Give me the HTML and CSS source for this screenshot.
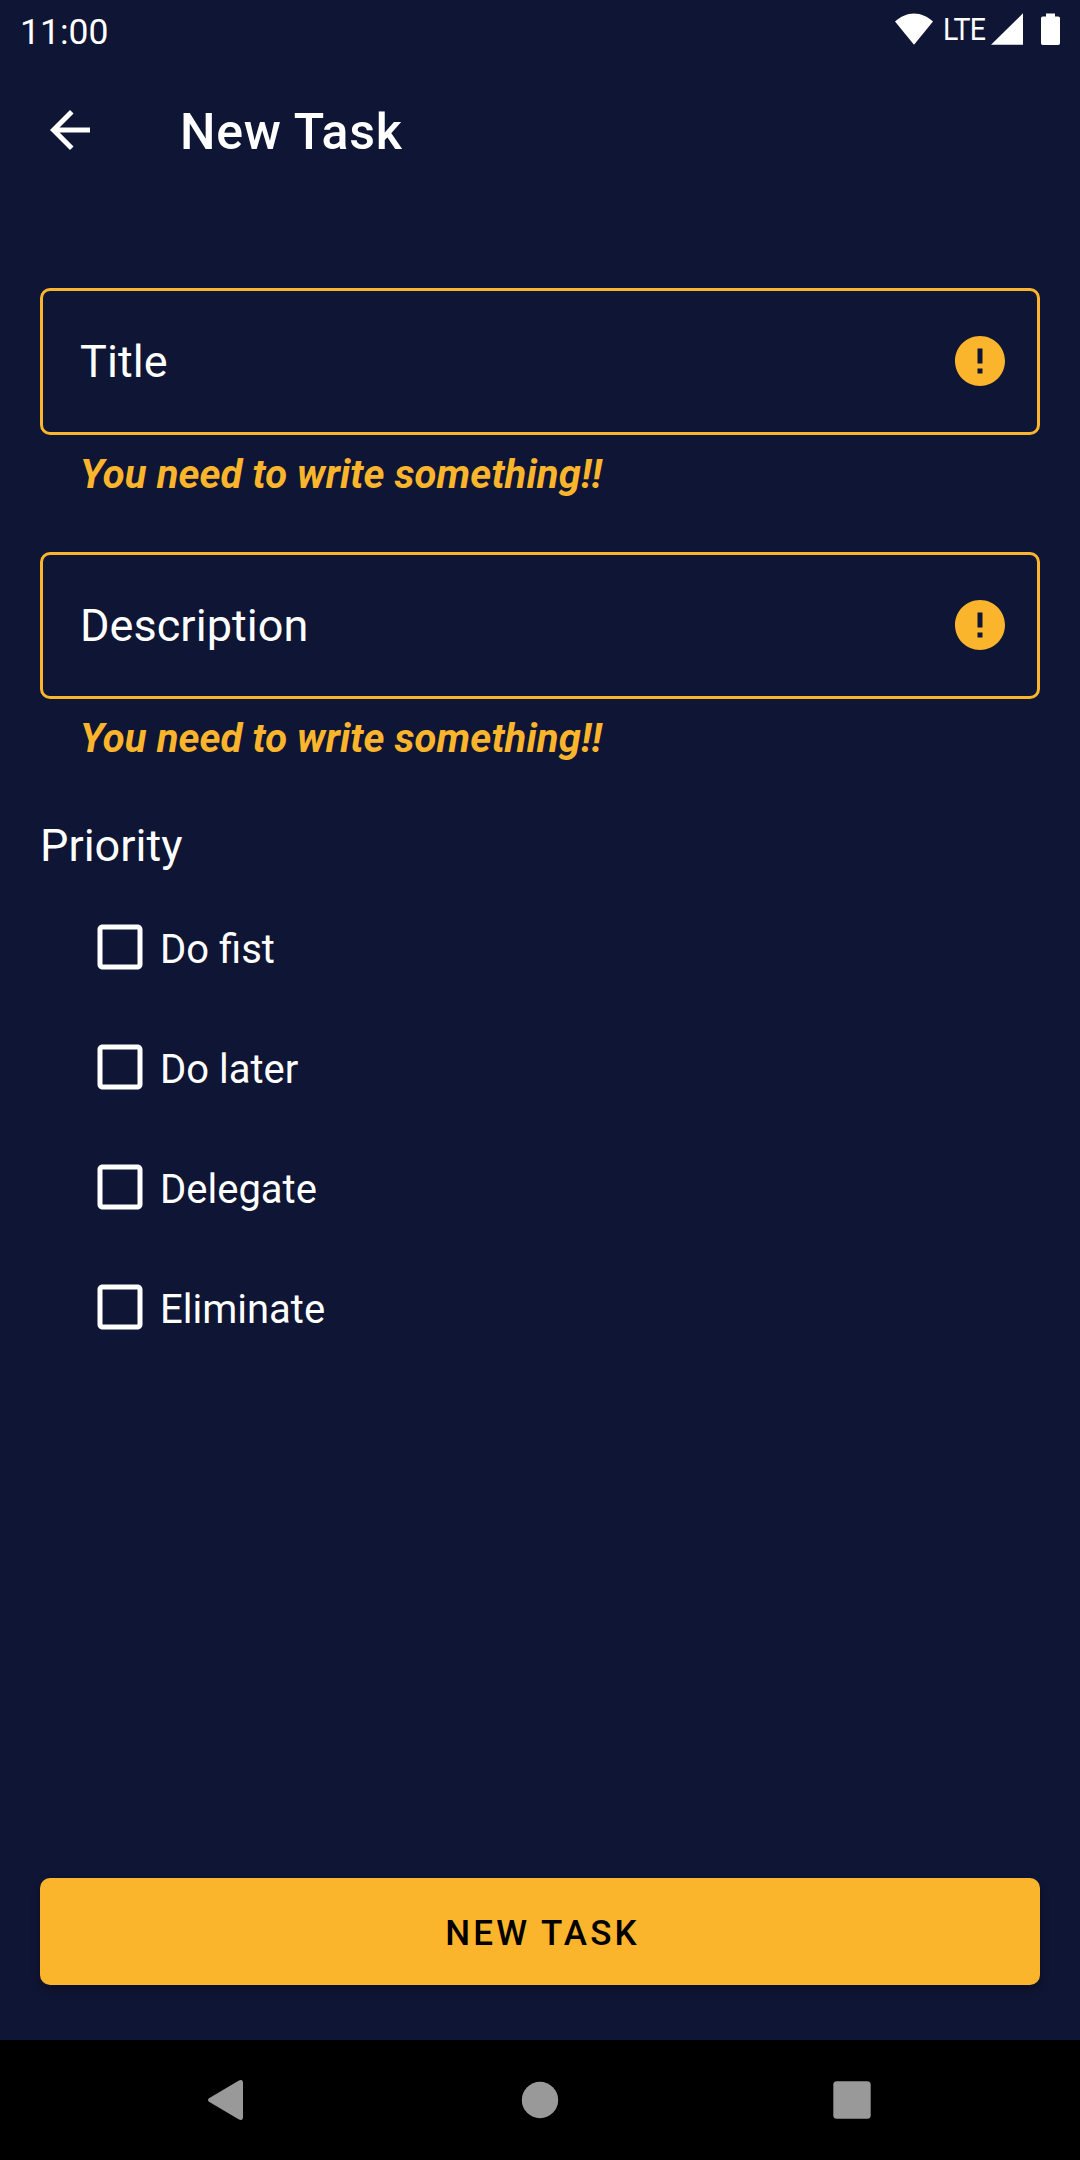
FILE: index.html
```html
<!DOCTYPE html>
<html lang="en">
<head>
<meta charset="utf-8">
<title>New Task</title>
<link rel="stylesheet" href="styles.css">
</head>
<body>
<div class="screen">
  <header class="status">
    <span class="clock">11:00</span>
    <div class="indicators">
      <svg class="wifi" width="38" height="32" viewBox="0 0 38 32"><path d="M19 31.700L0 8.600C5.500 3.400 12 0.400 19 0.400S32.500 3.400 38 8.600Z"/></svg>
      <span class="lte">LTE</span>
      <svg class="signal" width="32" height="32" viewBox="0 0 32 32"><path d="M0 31.700H32V0.300Z"/></svg>
      <svg class="battery" width="19" height="32" viewBox="0 0 19 32"><path d="M5 0.600H14V3.500H17.300Q19 3.500 19 5.200V30.200Q19 32 17.300 32H1.700Q0 32 0 30.200V5.200Q0 3.500 1.700 3.500H5Z"/></svg>
    </div>
  </header>
  <div class="appbar">
    <svg class="back" viewBox="0 0 24 24"><path d="M20 11H7.830l5.590-5.590L12 4l-8 8 8 8 1.410-1.410L7.830 13H20v-2z"/></svg>
    <h1 class="heading">New Task</h1>
  </div>
  <main class="form">
    <section class="group">
      <div class="field">
        <span class="label">Title</span>
        <svg class="error-icon" viewBox="0 0 24 24"><path d="M12 2C6.480 2 2 6.480 2 12s4.480 10 10 10 10-4.480 10-10S17.520 2 12 2zm1 15h-2v-2h2v2zm0-4h-2V7h2v6z"/></svg>
      </div>
      <p class="helper">You need to write something!!</p>
    </section>
    <section class="group">
      <div class="field">
        <span class="label">Description</span>
        <svg class="error-icon" viewBox="0 0 24 24"><path d="M12 2C6.480 2 2 6.480 2 12s4.480 10 10 10 10-4.480 10-10S17.520 2 12 2zm1 15h-2v-2h2v2zm0-4h-2V7h2v6z"/></svg>
      </div>
      <p class="helper">You need to write something!!</p>
    </section>
    <h2 class="priority">Priority</h2>
    <div class="options">
      <div class="option"><svg class="box" viewBox="0 0 24 24"><path d="M19 5v14H5V5h14m0-2H5c-1.100 0-2 .9-2 2v14c0 1.100.9 2 2 2h14c1.100 0 2-.9 2-2V5c0-1.100-.9-2-2-2z"/></svg><span class="option-text">Do fist</span></div>
      <div class="option"><svg class="box" viewBox="0 0 24 24"><path d="M19 5v14H5V5h14m0-2H5c-1.100 0-2 .9-2 2v14c0 1.100.9 2 2 2h14c1.100 0 2-.9 2-2V5c0-1.100-.9-2-2-2z"/></svg><span class="option-text">Do later</span></div>
      <div class="option"><svg class="box" viewBox="0 0 24 24"><path d="M19 5v14H5V5h14m0-2H5c-1.100 0-2 .9-2 2v14c0 1.100.9 2 2 2h14c1.100 0 2-.9 2-2V5c0-1.100-.9-2-2-2z"/></svg><span class="option-text">Delegate</span></div>
      <div class="option"><svg class="box" viewBox="0 0 24 24"><path d="M19 5v14H5V5h14m0-2H5c-1.100 0-2 .9-2 2v14c0 1.100.9 2 2 2h14c1.100 0 2-.9 2-2V5c0-1.100-.9-2-2-2z"/></svg><span class="option-text">Eliminate</span></div>
    </div>
    <button class="submit" type="button">NEW TASK</button>
  </main>
  <nav class="navbar">
    <svg class="nav-back" width="36" height="40" viewBox="0 0 36 40"><path d="M1 18.300L31 0.500Q35 -1 35 3V37Q35 41 31 39.500L1 21.700Q-1 20 1 18.300Z"/></svg>
    <svg class="nav-home" width="37" height="37" viewBox="0 0 37 37"><circle cx="20" cy="18" r="18.200"/></svg>
    <svg class="nav-recent" width="38" height="38" viewBox="0 0 38 38"><rect x=".3" y=".3" width="37.400" height="37.400" rx="3.500"/></svg>
  </nav>
</div>
</body>
</html>
```
FILE: styles.css
```css
* { box-sizing: border-box; margin: 0; padding: 0; }

body {
  width: 1080px;
  height: 2160px;
  background: #0f1534;
  color: #fff;
  font-family: Roboto, sans-serif;
  overflow: hidden;
}

svg { display: block; flex: none; fill: currentColor; overflow: visible; }

.screen { display: flex; flex-direction: column; height: 2160px; }

.status {
  display: flex;
  justify-content: space-between;
  height: 60px;
  padding: 0 20px;
}
.clock { font-size: 35.5px; line-height: 64px; }
.indicators { display: flex; align-items: flex-start; padding-top: 13px; }
.lte {
  margin: -13px 0 0 10px;
  width: 48px;
  font-size: 32px;
  line-height: 59px;
  letter-spacing: -1px;
  transform: scaleX(.89);
  transform-origin: left;
}
.battery { margin-left: 18px; }

.appbar { display: flex; align-items: center; gap: 80px; height: 140px; padding: 0 40px; }
.back { width: 60px; height: 60px; }
.heading { padding-top: 3px; font-size: 50px; line-height: 60px; font-weight: 500; letter-spacing: .75px; }

.form { display: flex; flex-direction: column; flex: 1; padding: 88px 40px 55px; }
.group { height: 264px; }
.field {
  display: flex;
  align-items: center;
  justify-content: space-between;
  height: 147px;
  padding: 0 27px 0 37px;
  border: 3px solid #fab52c;
  border-radius: 10px;
}
.label { font-size: 45px; line-height: 60px; letter-spacing: .05px; }
.error-icon { width: 60px; height: 60px; margin-bottom: 1px; color: #fab52c; }
.helper {
  padding: 16px 40px 0;
  color: #fab52c;
  font-size: 40px;
  line-height: 47px;
  font-weight: 700;
  font-style: italic;
  letter-spacing: .1px;
}

.priority { font-size: 45px; line-height: 60px; font-weight: 400; }
.options { padding: 11px 0 0 50px; }
.option { display: flex; align-items: center; gap: 10px; height: 120px; }
.box { width: 60px; height: 60px; }
.option-text { padding-top: 5px; font-size: 40px; line-height: 50px; }

.submit {
  height: 107px;
  margin-top: auto;
  padding: 5px 0 0 5px;
  border: 0;
  border-radius: 10px;
  background: #fab52c;
  box-shadow: 0 4px 10px rgba(0, 0, 0, .3);
  color: #000;
  font: 500 35px/60px Roboto, sans-serif;
  letter-spacing: 3.1px;
}

.navbar {
  display: flex;
  align-items: center;
  justify-content: space-between;
  height: 120px;
  padding: 0 209px 0 208px;
  background: #000;
  color: #999;
}
```
